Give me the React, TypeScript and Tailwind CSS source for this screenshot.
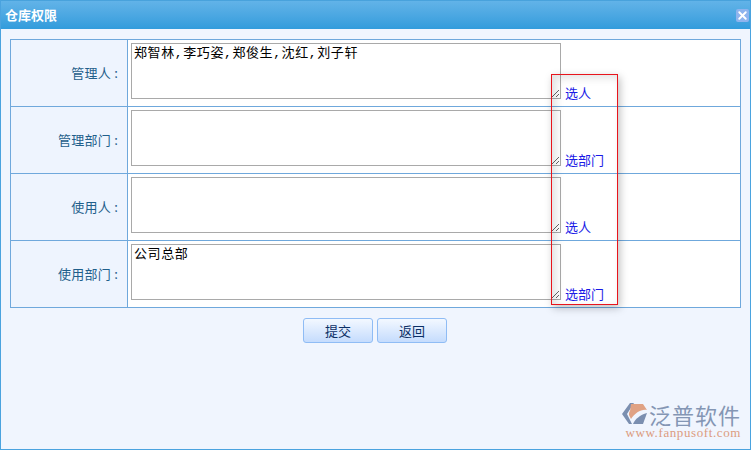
import React from 'react';
import { X } from 'lucide-react';

const rows = [
  { label: '管理人 :', value: '郑智林,李巧姿,郑俊生,沈红,刘子轩', link: '选人' },
  { label: '管理部门 :', value: '', link: '选部门' },
  { label: '使用人 :', value: '', link: '选人' },
  { label: '使用部门 :', value: '公司总部', link: '选部门' },
];

const buttonClass =
  'w-[70px] h-[25px] rounded-[3px] border border-[#8fbcf5] bg-gradient-to-b from-[#f3f8ff] to-[#c5dcfd] text-[13px] text-[#0b2f66]';

const App: React.FC = () => {
  return (
    <div className="relative w-[751px] h-[450px] flex flex-col overflow-hidden bg-[#f0f5fe] border-b border-x border-[#4aa3df] font-['Noto_Sans_CJK_SC',sans-serif]">
      {/* Title bar */}
      <div className="h-[29px] -mx-px shrink-0 flex items-center justify-between pl-[5px] pr-[1px] bg-gradient-to-b from-[#62b3e8] to-[#319cdc] border-t border-[#48a2dc]">
        <span className="text-[13px] font-bold text-white">仓库权限</span>
        <span className="w-[13px] h-[13px] mr-[1px] flex items-center justify-center rounded-[2px] bg-[#8fb4ee]">
          <X size={13} strokeWidth={3.5} className="text-white" />
        </span>
      </div>

      {/* Form table */}
      <div className="mt-[10px] mx-[9px] border border-[#6fa8dc] border-b-0 bg-white">
        {rows.map((row, i) => (
          <div key={i} className="flex h-[67px] border-b border-[#6fa8dc]">
            <div className="w-[117px] shrink-0 flex items-center justify-end pr-[9px] bg-[#eef4fe] border-r border-[#6fa8dc] text-[13px] tracking-[0.25px] whitespace-pre text-[#1f5f8b]">
              {row.label}
            </div>
            <div className="flex-1 flex pl-[3px] pt-[3px]">
              <textarea
                readOnly
                defaultValue={row.value}
                className="w-[430px] h-[56px] px-[2px] py-[1px] border border-[#a9a9a9] bg-white text-[13px] leading-[18px] tracking-[0.6px] text-black font-['Liberation_Mono','Noto_Sans_CJK_SC',monospace] outline-none"
              />
              <a className="self-start mt-[41px] ml-[4px] text-[13px] leading-[18px] text-[#1a1ae6]">{row.link}</a>
            </div>
          </div>
        ))}
      </div>

      {/* Actions */}
      <div className="mt-[10px] flex justify-center gap-[4px] pr-[1px]">
        <button className={buttonClass}>提交</button>
        <button className={buttonClass}>返回</button>
      </div>

      {/* Logo */}
      <div className="mt-auto mb-[10px] mr-[9px] self-end flex flex-col items-end">
        <div className="flex items-center gap-[1px]">
          <svg width="26" height="22" viewBox="0 0 26 22">
            <path d="M8 0h4L5 11l5 10H7L0 11z" fill="#7b8fb0" />
            <path d="M9 1h12l4 6c-6-1-12 3-16 9l-2-4c0-2 0-3 1-4z" fill="#e0a284" />
            <path d="M11 21c2-5 7-9 14-11l-4 11z" fill="#7b8fb0" />
          </svg>
          <span className="text-[22px] leading-[22px] tracking-[1px] text-[#8496b4]">泛普软件</span>
        </div>
        <span className="mt-[2px] text-[13px] leading-[12px] tracking-[0.6px] text-[#dc9c80] font-['Liberation_Serif',serif]">www.fanpusoft.com</span>
      </div>

      {/* Red annotation box */}
      <div className="absolute left-[550px] top-[74px] w-[67px] h-[231px] border border-[#e8141c] shadow-[2px_3px_8px_rgba(0,0,0,0.25),inset_4px_3px_8px_rgba(0,0,0,0.12)] pointer-events-none" />
    </div>
  );
};

export default App;
